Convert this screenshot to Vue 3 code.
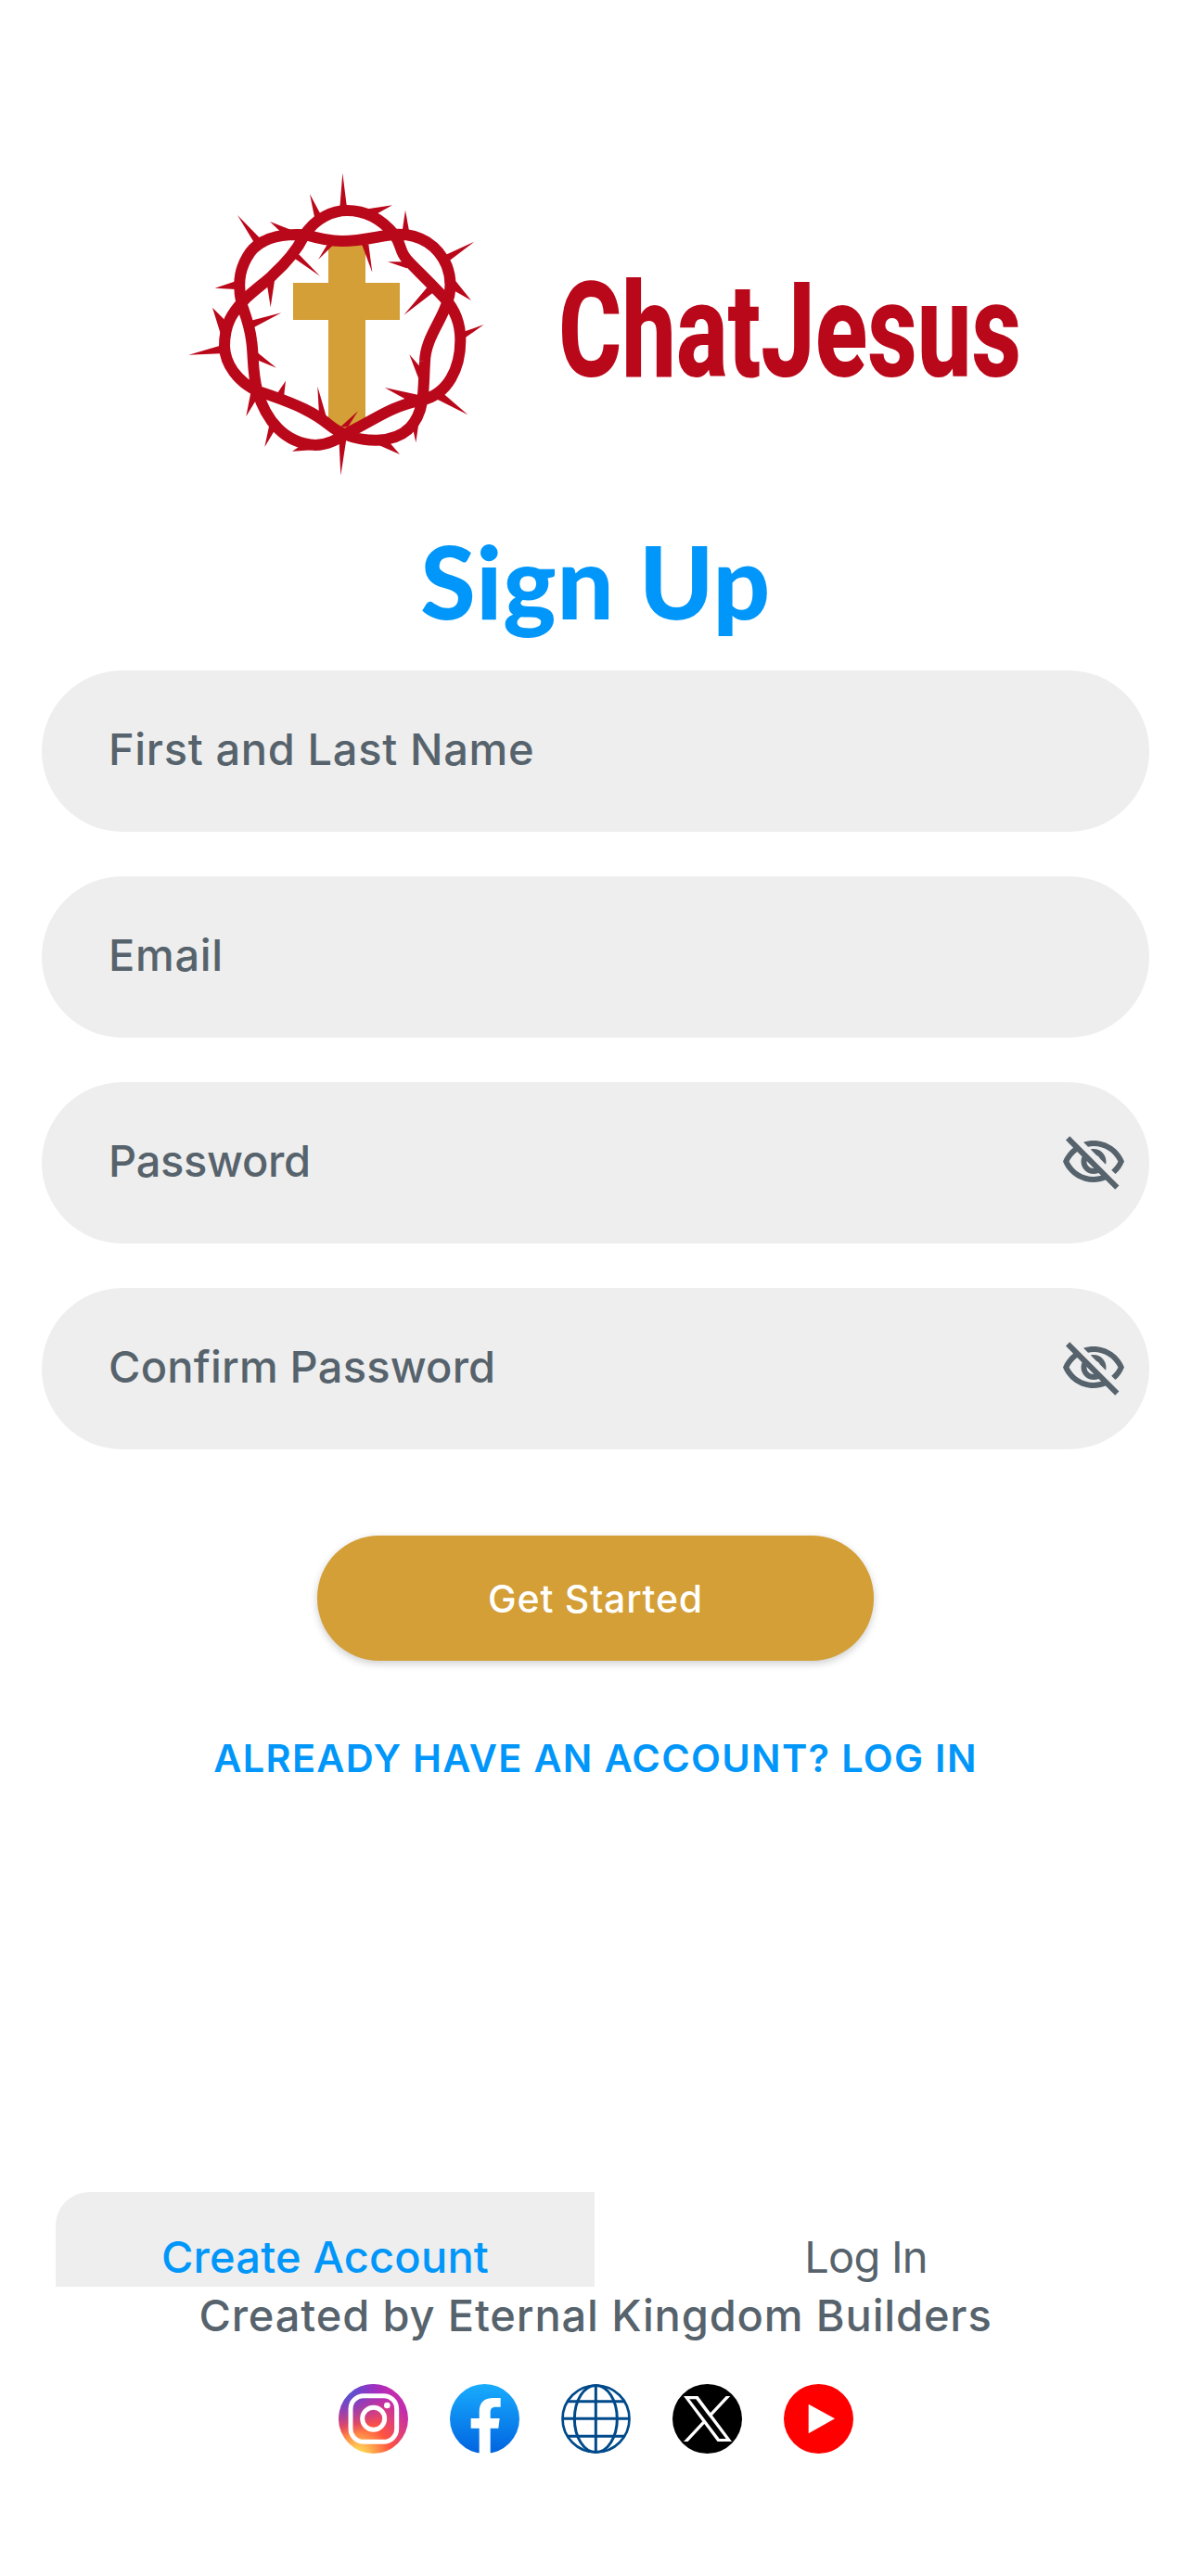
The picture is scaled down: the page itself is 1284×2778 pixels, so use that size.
<template>
    <main class="page">
        <header class="brand">
            <svg class="crown" viewBox="0 0 1050 1080">
                <path class="cross" d="M492 280H612V405H723V525H612V850L540 885L492 850V525H378V405H492Z" />
                <path
                    class="vine"
                    d="M412 255C450 193 510 171 552 171C610 171 663 197 706 250C728 280 722 302 744 327C765 352 810 392 868 455C900 490 919 535 919 590C919 680 880 765 795 784C690 805 640 850 555 890C520 912 490 930 450 930C350 925 290 850 262 755C245 690 251 640 243 590C238 545 224 510 212 475C195 400 208 350 240 305C280 255 350 245 420 250C470 265 500 270 535 270C600 270 650 255 700 249C790 240 850 290 875 350C890 390 893 430 872 480C850 540 806 590 804 660C801 710 801 750 796 785C785 850 750 910 650 914C600 915 540 902 495 865C450 828 400 800 262 755C200 725 158 670 156 610C156 540 180 500 225 455C260 422 290 402 312 380C350 345 390 300 412 255Z"
                />
                <polygon v-for="points in thorns" :key="points" class="thorn" :points="points" />
            </svg>
            <svg class="wordmark" viewBox="0 0 540 200">
                <text x="22" y="156" textLength="499" lengthAdjust="spacingAndGlyphs">ChatJesus</text>
            </svg>
        </header>

        <h1 class="title">Sign Up</h1>

        <form class="form" @submit.prevent>
            <label v-for="field in fields" :key="field.name" class="field">
                <span v-if="!form[field.name]" class="field-label" :class="field.name">{{ field.label }}</span>
                <input v-model="form[field.name]" class="field-input" :type="inputType(field)" />
                <button v-if="field.secret" type="button" class="eye-btn" @click="toggle(field.name)">
                    <svg viewBox="0 0 24 24">
                        <path d="M12 6c3.79 0 7.17 2.13 8.82 5.5-.59 1.22-1.42 2.27-2.41 3.12l1.41 1.41c1.39-1.23 2.49-2.77 3.18-4.53C21.27 7.11 17 4 12 4c-1.27 0-2.49.2-3.64.57l1.65 1.65C10.66 6.09 11.32 6 12 6zm-1.07 1.14L13 9.21c.57.25 1.03.71 1.28 1.28l2.07 2.07c.08-.34.14-.7.14-1.07C16.5 9.01 14.48 7 12 7c-.37 0-.72.05-1.07.14zM2.01 3.87l2.68 2.68C3.06 7.83 1.77 9.53 1 11.5 2.73 15.89 7 19 12 19c1.52 0 2.98-.29 4.32-.82l3.42 3.42 1.41-1.41L3.42 2.45 2.01 3.87zm7.5 7.5l2.61 2.61c-.04.01-.08.02-.12.02-1.38 0-2.5-1.12-2.5-2.5 0-.05.01-.08.01-.13zm-3.4-3.4l1.75 1.75c-.23.55-.36 1.15-.36 1.78 0 2.48 2.02 4.5 4.5 4.5.63 0 1.23-.13 1.77-.36l.98.98c-.88.24-1.8.38-2.75.38-3.79 0-7.17-2.13-8.82-5.5.7-1.43 1.72-2.61 2.93-3.53z" />
                    </svg>
                </button>
            </label>
            <button class="submit-btn">Get Started</button>
        </form>

        <a class="login-link">ALREADY HAVE AN ACCOUNT? LOG IN</a>

        <nav class="tabs">
            <button class="tab active">Create Account</button>
            <button class="tab">Log In</button>
        </nav>

        <footer class="footer">
            <p class="credit">Created by Eternal Kingdom Builders</p>
            <div class="socials">
                <svg viewBox="0 0 225 225">
                    <defs>
                        <radialGradient id="ig-warm" cx="0.27" cy="1.05" r="1">
                            <stop offset="0" stop-color="#ffdd55" />
                            <stop offset="0.12" stop-color="#ffd055" />
                            <stop offset="0.48" stop-color="#ff543e" />
                            <stop offset="0.95" stop-color="#c22cae" />
                        </radialGradient>
                        <radialGradient id="ig-cool" cx="0.05" cy="0.02" r="0.72">
                            <stop offset="0" stop-color="#3771c8" />
                            <stop offset="0.25" stop-color="#5b52d0" />
                            <stop offset="1" stop-color="#8a20d8" stop-opacity="0" />
                        </radialGradient>
                    </defs>
                    <circle cx="112.5" cy="112.5" r="112.5" fill="url(#ig-warm)" />
                    <circle cx="112.5" cy="112.5" r="112.5" fill="url(#ig-cool)" />
                    <g fill="none" stroke="#fff" stroke-width="15">
                        <rect x="39" y="38" width="149" height="149" rx="42" />
                        <circle cx="113" cy="112" r="36" />
                    </g>
                    <circle cx="157" cy="69" r="10" fill="#fff" />
                </svg>
                <svg viewBox="0 0 225 225">
                    <defs>
                        <linearGradient id="fb" x1="0" y1="0" x2="0" y2="1">
                            <stop offset="0" stop-color="#18acfe" />
                            <stop offset="1" stop-color="#0163e0" />
                        </linearGradient>
                    </defs>
                    <circle cx="112.5" cy="112.5" r="112.5" fill="url(#fb)" />
                    <path fill="#fff" d="M95 225V143H68V111H95V90C95 60 111 45 140 45H164V74H148C136 74 131 80 131 92V111H161L157 143H131V225Z" />
                </svg>
                <svg viewBox="0 0 225 225">
                    <g fill="none" stroke="#004a8b" stroke-width="9">
                        <circle cx="112.5" cy="112.5" r="108" stroke-width="8" />
                        <ellipse cx="112" cy="112.5" rx="69" ry="108" />
                        <path d="M112 4V221M4 112H221M20 56H205M20 169H205" />
                    </g>
                </svg>
                <svg viewBox="0 0 225 225">
                    <circle cx="112.5" cy="112.5" r="112.5" />
                    <path
                        fill="#fff"
                        transform="translate(36 39) scale(0.13 0.12)"
                        d="M714 519L1161 0H1055L667 451L357 0H0L468 682L0 1226H106L515 750L843 1226H1200ZM569 688L522 620L144 80H307L611 516L659 584L1055 1150H892Z"
                    />
                </svg>
                <svg viewBox="0 0 225 225">
                    <circle cx="112.5" cy="112.5" r="112.5" fill="#f00" />
                    <path fill="#fff" d="M80 65L165 112L80 160Z" />
                </svg>
            </div>
        </footer>
    </main>
</template>

<script setup>
import { reactive } from 'vue'

const fields = [
    { name: 'fullname', label: 'First and Last Name' },
    { name: 'email', label: 'Email' },
    { name: 'password', label: 'Password', secret: true },
    { name: 'confirm', label: 'Confirm Password', secret: true }
]

const form = reactive({ fullname: '', email: '', password: '', confirm: '' })
const visible = reactive({ password: false, confirm: false })

const inputType = (field) => (field.secret && !visible[field.name] ? 'password' : 'text')

const toggle = (name) => {
    visible[name] = !visible[name]
}

const thorns = [
    '538,50 552,162 529,162',
    '432,118 468,185 447,192',
    '699,154 645,184 620,166',
    '741,170 754,242 731,238',
    '198,186 275,265 255,280',
    '303,207 372,234 340,242',
    '964,272 885,332 872,314',
    '954,462 895,428 903,398',
    '995,540 930,586 934,562',
    '943,832 840,780 865,764',
    '775,922 765,875 784,860',
    '723,960 655,930 690,922',
    '532,1028 526,905 551,905',
    '375,950 402,932 440,946',
    '286,936 302,860 322,876',
    '226,837 242,755 264,775',
    '40,638 142,608 144,634',
    '117,485 162,530 175,535 145,575',
    '125,422 192,400 192,426',
    '305,484 296,425 290,400 320,385 316,412',
    '465,383 385,328 372,312 398,314',
    '459,330 488,282 506,284',
    '634,371 600,280 622,280',
    '684,337 738,337 760,350 745,358',
    '736,509 808,424 825,405 848,428 826,440',
    '340,502 250,550 242,527',
    '324,680 262,655 262,630',
    '354,722 348,775 325,765',
    '457,740 486,840 462,832',
    '588,820 556,870 530,872',
    '674,744 785,768 750,786',
    '754,637 792,680 785,718'
]
</script>

<style>
body {
    background: #fff;
}
</style>

<style scoped>
.page {
    box-sizing: border-box;
    display: flex;
    flex-direction: column;
    width: 1284px;
    height: 2778px;
    padding-top: 170px;
    overflow: hidden;
    font-family: Inter, "Open Sans", sans-serif;
    color: #57636c;
    background: #fff;
}

button {
    padding: 0;
    border: none;
    font-family: inherit;
    color: inherit;
    background: none;
    cursor: pointer;
}

.brand {
    display: flex;
    align-items: center;
    gap: 40px;
    padding-left: 190px;
}

.crown {
    width: 350px;
    height: 360px;
}

.cross {
    fill: #d39f36;
}

.vine {
    fill: none;
    stroke: #ba081b;
    stroke-width: 36;
    stroke-linejoin: round;
}

.thorn {
    fill: #ba081b;
}

.wordmark {
    width: 540px;
    height: 200px;
    overflow: visible;
}

.wordmark text {
    font-family: Roboto, sans-serif;
    font-size: 143px;
    font-weight: 800;
    fill: #ba081b;
}

.title {
    margin: 31px 0 32px;
    font-family: Lato, sans-serif;
    font-size: 108px;
    font-weight: 900;
    line-height: 130px;
    letter-spacing: 0.8px;
    text-align: center;
    color: #0096fa;
}

.form {
    display: flex;
    flex-direction: column;
    gap: 48px;
    padding: 0 45px;
}

.field {
    box-sizing: border-box;
    display: flex;
    align-items: center;
    height: 174px;
    padding: 0 24px 4px 72px;
    border-radius: 87px;
    font-size: 47px;
    background: #eee;
}

.field-label {
    padding-bottom: 1px;
    font-weight: 450;
    letter-spacing: 0.65px;
    white-space: nowrap;
}

.field-label.password {
    letter-spacing: -0.3px;
}

.field-label.confirm {
    letter-spacing: 0.2px;
}

.field-input {
    flex: 1;
    min-width: 0;
    border: none;
    outline: none;
    font: inherit;
    color: inherit;
    background: none;
}

.eye-btn {
    width: 72px;
    height: 72px;
    margin-top: 4px;
}

.eye-btn svg {
    display: block;
    fill: #57636c;
}

.submit-btn {
    align-self: center;
    width: 600px;
    height: 135px;
    margin-top: 45px;
    border-radius: 67px;
    font-size: 41px;
    font-weight: 500;
    letter-spacing: 0.8px;
    color: #fff;
    background: #d39f36;
    box-shadow: 0 3px 8px rgba(0, 0, 0, 0.2);
}

.login-link {
    margin-top: 75px;
    font-size: 41.5px;
    font-weight: 600;
    line-height: 60px;
    letter-spacing: 1.3px;
    text-align: center;
    color: #0096fa;
}

.tabs {
    display: flex;
    height: 102px;
    margin: 438px 60px 0;
    overflow: hidden;
}

.tab {
    flex: 1;
    height: 139px;
    padding-left: 2px;
    font-size: 47px;
    letter-spacing: -0.8px;
}

.tab.active {
    padding: 0;
    border-top-left-radius: 36px;
    font-weight: 450;
    letter-spacing: 0.2px;
    color: #0096fa;
    background: #eee;
}

.footer {
    text-align: center;
}

.credit {
    margin: 1px 0 44px;
    font-size: 47px;
    font-weight: 450;
    line-height: 60px;
    letter-spacing: 0.85px;
}

.socials {
    display: flex;
    justify-content: center;
    gap: 45px;
}

.socials svg {
    width: 75px;
    height: 75px;
}
</style>
